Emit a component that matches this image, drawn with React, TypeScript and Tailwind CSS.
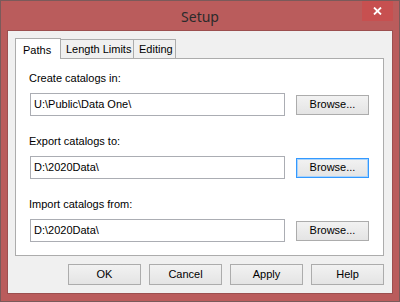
const FONT = "font-['Liberation_Sans',Arial,sans-serif]";

interface PathRowProps {
  label: string;
  value: string;
  focused?: boolean;
}

function WinButton({ children, focused = false, className = '' }: {
  children: string;
  focused?: boolean;
  className?: string;
}) {
  return (
    <button
      className={`flex items-center justify-center bg-gradient-to-b from-[#f2f2f2] to-[#e4e4e4] text-[11px] text-black leading-none ${
        focused
          ? 'border border-[#3399ff] shadow-[inset_0_0_0_1px_#a9d3fb]'
          : 'border border-[#acacac]'
      } ${className}`}
    >
      {children}
    </button>
  );
}

function PathRow({ label, value, focused }: PathRowProps) {
  return (
    <div className="flex flex-col">
      <div className="h-[13px] leading-[13px] text-[11px] text-black">{label}</div>
      <div className="mt-[8px] flex items-center">
        <div className="ml-px flex h-[23px] w-[255px] items-center border border-[#abadb3] bg-white pl-[3px] text-[11px] text-black">
          {value}
        </div>
        <WinButton focused={focused} className="ml-[11px] h-[20px] w-[73px]">
          Browse...
        </WinButton>
      </div>
    </div>
  );
}

export default function App() {
  return (
    <div className={`${FONT} flex h-[302px] w-[400px] flex-col border border-[#7a5a5a] bg-[#ba5c5c]`}>
      {/* Title bar */}
      <div className="relative flex h-[29px] shrink-0 items-center justify-center">
        <span className="text-[14px] text-[#2b2b2b] font-['Noto_Sans','Liberation_Sans',sans-serif] pt-[2px]">Setup</span>
        <div className="absolute right-[6px] top-0 flex h-[20px] w-[31px] items-center justify-center bg-[#c75050]">
          <svg width="9" height="8" viewBox="0 0 9 8">
            <path d="M1 0.5 L8 7.5 M8 0.5 L1 7.5" stroke="white" strokeWidth="1.8" />
          </svg>
        </div>
      </div>

      {/* Client area */}
      <div className="mx-[6px] flex h-[264px] flex-col border border-[#9c4f4f] bg-[#f0f0f0] pl-[7px] pr-[8px] pt-[7px]">
        {/* Tabs */}
        <div className="flex items-end text-[11px] text-black">
          <div className="relative z-10 -mb-px flex h-[21px] w-[46px] items-start border border-b-0 border-[#acacac] bg-white pl-[7px] pt-[3px]">
            Paths
          </div>
          <div className="flex h-[19px] w-[73px] items-center border border-l-0 border-b-0 border-[#acacac] bg-[#f0f0f0] pl-[5px]">
            Length Limits
          </div>
          <div className="flex h-[19px] w-[42px] items-center border border-l-0 border-b-0 border-[#acacac] bg-[#f0f0f0] pl-[5px]">
            Editing
          </div>
        </div>

        {/* Panel */}
        <div className="flex h-[198px] w-[369px] flex-col gap-[19px] border border-[#acacac] bg-white pl-[13px] pt-[13px]">
          <PathRow label="Create catalogs in:" value="U:\Public\Data One\" />
          <PathRow label="Export catalogs to:" value="D:\2020Data\" focused />
          <PathRow label="Import catalogs from:" value="D:\2020Data\" />
        </div>

        {/* Dialog buttons */}
        <div className="mt-[8px] flex justify-end gap-[8px]">
          <WinButton className="h-[21px] w-[73px]">OK</WinButton>
          <WinButton className="h-[21px] w-[73px]">Cancel</WinButton>
          <WinButton className="h-[21px] w-[73px]">Apply</WinButton>
          <WinButton className="h-[21px] w-[73px]">Help</WinButton>
        </div>
      </div>
    </div>
  );
}
